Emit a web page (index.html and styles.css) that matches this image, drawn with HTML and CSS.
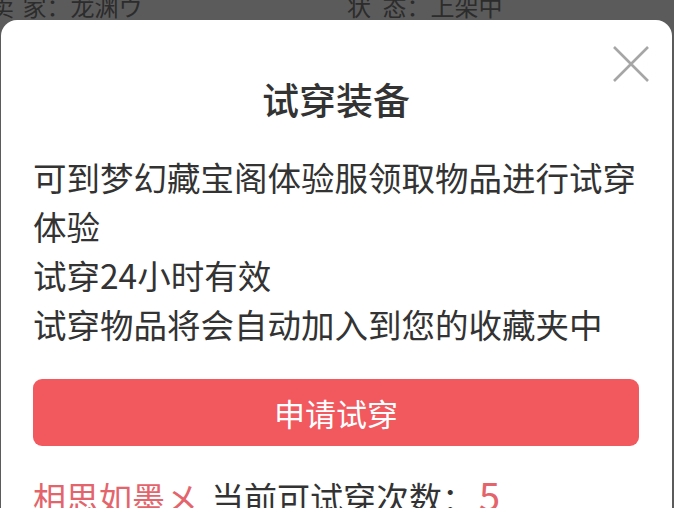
FILE: index.html
```html
<!DOCTYPE html>
<html lang="zh-CN">
<head>
<meta charset="UTF-8">
<meta name="viewport" content="width=device-width,initial-scale=1">
<title>试穿装备</title>
<link rel="stylesheet" href="styles.css">
</head>
<body>

<!-- page behind the dialog -->
<div class="info">
  <span class="seller">卖 家：龙渊ウ</span>
  <span class="state">状 态：上架中</span>
</div>

<!-- dialog -->
<div class="overlay">
  <div class="dialog">
    <button class="close" aria-label="关闭">
      <svg viewBox="0 0 38 38" width="38" height="38"><path d="M2 2L36 36M36 2L2 36" stroke="#a6a6a6" stroke-width="2.6" fill="none"/></svg>
    </button>
    <h2>试穿装备</h2>
    <div class="desc">
      <p>可到梦幻藏宝阁体验服领取物品进行试穿体验</p>
      <p>试穿24小时有效</p>
      <p>试穿物品将会自动加入到您的收藏夹中</p>
    </div>
    <button class="apply">申请试穿</button>
    <div class="count"><span class="nick">相思如墨メ</span>当前可试穿次数：<span class="num">5</span></div>
  </div>
</div>

</body>
</html>
```

FILE: styles.css
```css
:root{
  --red:#f2595f;
  --text:#333;
  font-family:"Noto Sans CJK SC","Noto Sans",sans-serif;
}
*{box-sizing:border-box;margin:0;padding:0}
html,body{height:100%;overflow:hidden}
body{background:#5b5b5b}

.info{display:flex;height:20px;font-size:24px;line-height:20px;color:#2c2c2c;margin-top:-4px;white-space:nowrap}
.seller{margin-left:-10px;width:357px;word-spacing:3px}
.state{word-spacing:6px}

.overlay{position:fixed;inset:0;padding:20px 2px 0 1px}
.dialog{
  position:relative;background:#fff;border-radius:16px;height:520px;
  padding:0 33px 0 32px;color:var(--text)
}
.close{position:absolute;top:25px;right:22px;border:none;background:none;cursor:pointer;display:block;line-height:0}

h2{font-size:37px;font-weight:500;text-align:center;line-height:44px;padding-top:57px;color:#333}
.desc{margin-top:31px;font-size:33.5px;line-height:49px}

.apply{
  display:block;width:100%;height:67px;margin-top:31px;border:none;border-radius:9px;
  background:var(--red);color:#fff;font-family:inherit;font-size:31px;cursor:pointer
}
.count{margin-top:27px;font-size:33px;line-height:44px;white-space:nowrap}
.nick,.num{color:#e4646c}
.nick{margin-right:13px}
.num{font-size:38px;margin-left:4px}
```
